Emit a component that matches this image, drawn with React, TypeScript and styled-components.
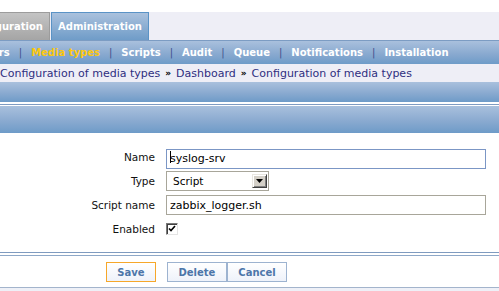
import React from 'react'
import styled, { createGlobalStyle, css } from 'styled-components'

const GlobalStyle = createGlobalStyle`
    html, body {
        margin: 0;
        padding: 0;
        overflow: hidden;
        background: #fff;
    }
    body {
        font-family: "DejaVu Sans", Verdana, sans-serif;
    }
`

const blueBar = css`
    background: linear-gradient(#a9c0dd, #8aaad0 55%, #6e9bc8);
`

const subMenu = ['Users', 'Media types', 'Scripts', 'Audit', 'Queue', 'Notifications', 'Installation']
const crumbs = ['Configuration of media types', 'Dashboard', 'Configuration of media types']

export default function App() {
    return (
        <Page>
            <GlobalStyle />
            <TopGap />
            <TabRow>
                <Tab $clipped>Configuration</Tab>
                <Tab $active>Administration</Tab>
            </TabRow>
            <SubMenu>
                <SubList>
                    {subMenu.map((item, i) => (
                        <React.Fragment key={item}>
                            {i > 0 && <Pipe>|</Pipe>}
                            <SubItem $active={item === 'Media types'}>{item}</SubItem>
                        </React.Fragment>
                    ))}
                </SubList>
            </SubMenu>
            <Crumbs>
                {crumbs.map((c, i) => (
                    <React.Fragment key={i}>
                        {i > 0 && <CrumbSep>»</CrumbSep>}
                        <span>{c}</span>
                    </React.Fragment>
                ))}
            </Crumbs>
            <TitleBar />
            <Divider />
            <FormHeader />
            <Form>
                <Label>Name</Label>
                <CaretWrap>
                    <TextInput $focused readOnly value='syslog-srv' />
                </CaretWrap>
                <Label>Type</Label>
                <Select>
                    <span>Script</span>
                    <ArrowButton>
                        <svg width='7' height='4' viewBox='0 0 7 4'>
                            <path d='M0 0h7L3.5 4z' fill='#000' />
                        </svg>
                    </ArrowButton>
                </Select>
                <Label>Script name</Label>
                <TextInput readOnly value='zabbix_logger.sh' />
                <Label>Enabled</Label>
                <CheckCell>
                    <CheckBox>
                        <svg width='8' height='8' viewBox='0 0 8 8'>
                            <path d='M1 3.5l2 2 4-4.5' stroke='#000' strokeWidth='1.6' fill='none' />
                        </svg>
                    </CheckBox>
                </CheckCell>
            </Form>
            <Footer>
                <ButtonRow>
                    <Button $primary>Save</Button>
                    <ButtonGroup>
                        <Button>Delete</Button>
                        <Button>Cancel</Button>
                    </ButtonGroup>
                </ButtonRow>
            </Footer>
        </Page>
    )
}

const Page = styled.div`
    min-height: 100vh;
    background: #eef0f7;
`

const TopGap = styled.div`
    height: 12px;
    background: #fff;
`

const TabRow = styled.div`
    display: flex;
    gap: 1px;
    height: 28px;
    background: #eeeef6;
`

const Tab = styled.div<{ $active?: boolean; $clipped?: boolean }>`
    box-sizing: border-box;
    height: 28px;
    display: flex;
    align-items: center;
    padding: 0 6px;
    color: #fff;
    font-size: 10px;
    font-weight: bold;
    white-space: nowrap;
    overflow: hidden;
    border: 1px solid ${p => (p.$active ? '#5a93c6' : '#9c9c9c')};
    border-bottom: none;
    background: ${p => (p.$active ? 'linear-gradient(#aac1dd, #6f9cc8)' : 'linear-gradient(#c4c4c4, #a5a5a5)')};
    ${p =>
        p.$clipped &&
        css`
            width: 50px;
            justify-content: flex-end;
            border-left: none;
        `}
`

const SubMenu = styled.div`
    ${blueBar};
    box-sizing: border-box;
    height: 24px;
    border-top: 1px solid #7c9cc3;
    display: flex;
    align-items: center;
    overflow: hidden;
`

const SubList = styled.div`
    display: flex;
    align-items: center;
    margin-left: -22px;
    white-space: nowrap;
`

const SubItem = styled.span<{ $active?: boolean }>`
    font-size: 10px;
    font-weight: bold;
    color: ${p => (p.$active ? '#fdc80f' : '#fff')};
`

const Pipe = styled.span`
    font-size: 10px;
    color: #3f4f8c;
    margin: 0 9px;
`

const Crumbs = styled.div`
    height: 18px;
    display: flex;
    align-items: center;
    background: #eeeef6;
    color: #2e2e80;
    font-size: 11px;
    white-space: nowrap;
`

const CrumbSep = styled.span`
    color: #000;
    font-weight: bold;
    font-size: 9px;
    margin: 0 5px;
`

const TitleBar = styled.div`
    ${blueBar};
    height: 20px;
`

const Divider = styled.div`
    height: 1px;
    background: #7f9cc2;
    border-top: 2px solid #fff;
    border-bottom: 1px solid #fff;
`

const FormHeader = styled.div`
    ${blueBar};
    height: 27px;
`

const Form = styled.div`
    background: #fff;
    display: grid;
    grid-template-columns: 155px 320px;
    column-gap: 11px;
    row-gap: 4px;
    padding: 14px 0 13px;
`

const Label = styled.div`
    align-self: center;
    text-align: right;
    font-size: 10.5px;
    color: #111;
    white-space: nowrap;
`

const TextInput = styled.input<{ $focused?: boolean }>`
    box-sizing: border-box;
    width: 320px;
    height: 20px;
    margin: 0;
    padding: 0 3px;
    border: 1px solid ${p => (p.$focused ? '#7b96c5' : '#a8a69a')};
    outline: none;
    background: #fff;
    font-family: "DejaVu Sans", Verdana, sans-serif;
    font-size: 11px;
    color: #000;
`

const CaretWrap = styled.div`
    position: relative;
    height: 20px;
    &::after {
        content: '';
        position: absolute;
        left: 4px;
        top: 4px;
        width: 1px;
        height: 12px;
        background: #000;
    }
`

const Select = styled.div`
    box-sizing: border-box;
    width: 103px;
    height: 20px;
    border: 1px solid #a8a69a;
    display: flex;
    align-items: center;
    justify-content: space-between;
    padding: 0 1px 0 6px;
    font-size: 10.5px;
    color: #000;
`

const ArrowButton = styled.div`
    box-sizing: border-box;
    width: 15px;
    height: 14px;
    display: flex;
    align-items: center;
    justify-content: center;
    background: #d4d0c8;
    border: 1px solid;
    border-color: #e8e6e0 #404040 #404040 #e8e6e0;
    box-shadow: inset 1px 1px #fff, inset -1px -1px #808080;
`

const CheckCell = styled.div`
    height: 20px;
    display: flex;
    align-items: center;
`

const CheckBox = styled.span`
    box-sizing: border-box;
    width: 12px;
    height: 12px;
    display: flex;
    align-items: center;
    justify-content: center;
    background: #fff;
    border: 1px solid;
    border-color: #7a7a7a #e4e4e4 #e4e4e4 #7a7a7a;
    box-shadow: inset 1px 1px #404040;
`

const Footer = styled.div`
    border-top: 1px solid #7f9bbf;
    padding-top: 2px;
    background: #fff;
`

const ButtonRow = styled.div`
    display: grid;
    grid-template-columns: 156px 320px;
    column-gap: 10px;
    padding: 6px 0 5px;
    background: #fff;
    border-top: 1px solid #8ea8c8;
    border-bottom: 1px solid #a3b4cc;
`

const ButtonGroup = styled.div`
    display: flex;
    margin-left: 1px;
`

const Button = styled.button<{ $primary?: boolean }>`
    justify-self: end;
    box-sizing: border-box;
    height: 20px;
    margin: 0;
    padding: 0 10.5px;
    border: 1px solid ${p => (p.$primary ? '#f6a72a' : '#9db3d0')};
    background: linear-gradient(#ffffff, #eef2fa);
    color: #4d76a9;
    font-family: "DejaVu Sans", Verdana, sans-serif;
    font-size: 10px;
    font-weight: bold;
    cursor: pointer;
`
